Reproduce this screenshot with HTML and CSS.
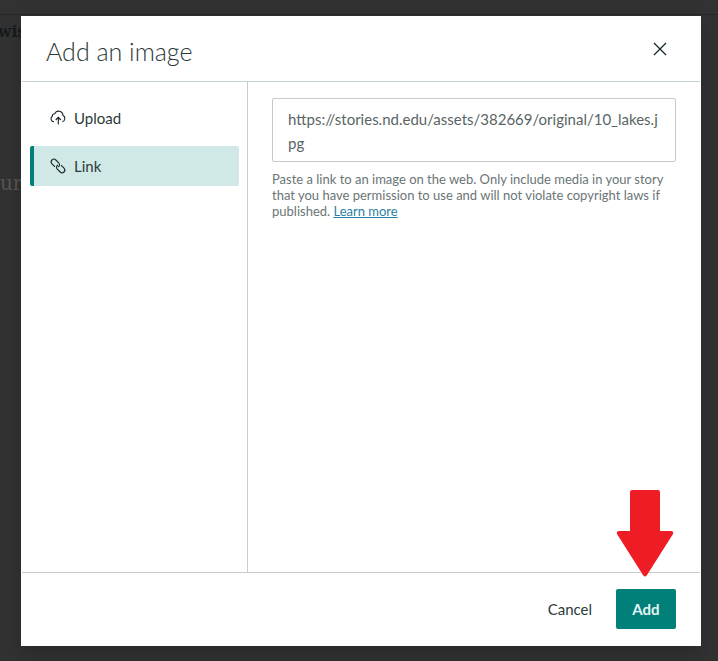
FILE: index.html
```html
<!DOCTYPE html>
<html lang="en">
<head>
<meta charset="utf-8">
<meta name="viewport" content="width=device-width, initial-scale=1">
<title>Add an image</title>
<link rel="stylesheet" href="styles.css">
</head>
<body>
<div class="page" aria-hidden="true">
  <div class="page-bar"></div>
  <p class="page-heading">wis</p>
  <p class="page-text">ur</p>
</div>
<div class="backdrop">
  <section class="dialog" role="dialog" aria-modal="true" aria-labelledby="dialog-title">
    <header class="dialog-header">
      <h1 class="dialog-title" id="dialog-title">Add an image</h1>
      <button class="close" type="button" aria-label="Close">
        <svg width="14" height="14" viewBox="0 0 14 14"><path d="M1 1l12 12M13 1L1 13"/></svg>
      </button>
    </header>
    <div class="dialog-body">
      <nav class="sources">
        <button class="source" type="button">
          <svg class="icon" width="16" height="16" viewBox="0 0 16 16"><path d="M4 11.800A3.100 3.100 0 0 1 2.300 6.200 2.300 2.300 0 0 1 4.700 3.700 4.300 4.300 0 0 1 12.900 5.300 3.500 3.500 0 0 1 12.300 11.800M8.300 14.500V7.500M5.700 10L8.300 7.300l2.600 2.700"/></svg>
          Upload
        </button>
        <button class="source source-active" type="button" aria-current="true">
          <svg class="icon" width="16" height="16" viewBox="0 0 16 16"><g transform="rotate(45 8 8)"><path d="M6.500 10.700H2.200A2.700 2.700 0 0 1 2.200 5.300H6.300A2.700 2.700 0 0 1 8.900 8.600M9.500 5.300H13.800A2.700 2.700 0 0 1 13.800 10.700H9.700A2.700 2.700 0 0 1 7.100 7.400"/></g></svg>
          Link
        </button>
      </nav>
      <div class="panel">
        <textarea class="url" rows="2" aria-label="Image link" aria-describedby="url-help" spellcheck="false">https://stories.nd.edu/assets/382669/original/10_lakes.jpg</textarea>
        <p class="help" id="url-help">Paste a link to an image on the web. Only include media in your story that you have permission to use and will not violate copyright laws if published. <a class="help-link" href="#">Learn more</a></p>
      </div>
    </div>
    <footer class="dialog-footer">
      <button class="button" type="button">Cancel</button>
      <div class="primary">
        <svg class="arrow" width="58" height="88" viewBox="0 0 58 88" aria-hidden="true"><path d="M16 1h26q2 0 2 2v39h11q3 0 2 3L31 86q-2 3-4 0L1 45q-1-3 2-3h11V3q0-2 2-2z"/></svg>
        <button class="button button-primary" type="button">Add</button>
      </div>
    </footer>
  </section>
</div>
</body>
</html>
```
FILE: styles.css
```css
* {
  box-sizing: border-box;
}

body {
  margin: 0;
  background: #323232;
  color: #2b3a3a;
  font-family: Lato, "Liberation Sans", sans-serif;
  font-size: 15px;
}

button,
textarea {
  font: inherit;
  color: inherit;
}

.page {
  position: absolute;
  inset: 0;
  overflow: hidden;
  font-family: "Noto Serif", "Liberation Serif", serif;
}

.page-bar {
  height: 15px;
  border-bottom: 1px solid #272727;
}

.page-heading {
  margin: 4px 0 0 -2px;
  color: #15191c;
  font-size: 16px;
  font-weight: bold;
  line-height: 24px;
}

.page-text {
  margin: 126px 0 0;
  color: #555;
  font-size: 20px;
  line-height: 28px;
}

.backdrop {
  position: relative;
  display: flex;
  min-height: 100vh;
  padding: 16px 17px 15px 21px;
}

.dialog {
  display: flex;
  flex: 1;
  flex-direction: column;
  background: #fff;
  box-shadow: 0 8px 20px rgba(0, 0, 0, 0.2);
}

.dialog-header {
  display: flex;
  align-items: center;
  justify-content: space-between;
  height: 66px;
  margin: 0 1px;
  padding: 4px 24px 0;
  border-bottom: 1px solid #c4d2d3;
}

.dialog-title {
  margin: 0;
  font-size: 25px;
  font-weight: 300;
  line-height: 32px;
}

.close {
  display: flex;
  align-items: center;
  justify-content: center;
  width: 32px;
  height: 32px;
  margin-bottom: 4px;
  padding: 0;
  border: 0;
  background: none;
}

.close svg {
  fill: none;
  stroke: #16262a;
  stroke-width: 1.3;
}

.dialog-body {
  display: flex;
  flex: 1;
}

.sources {
  display: flex;
  flex: 0 0 227px;
  flex-direction: column;
  gap: 8px;
  padding: 16px 8px 16px 9px;
  border-right: 1px solid #c5cdce;
}

.source {
  display: flex;
  align-items: center;
  gap: 8px;
  height: 40px;
  padding: 0 16px;
  border: 0;
  border-left: 4px solid transparent;
  border-radius: 2px;
  background: none;
  text-align: left;
}

.source-active {
  border-left-color: #008078;
  background: #d1e9e6;
}

.icon {
  overflow: visible;
  fill: none;
  stroke: #16262a;
  stroke-width: 1.1;
}

.panel {
  flex: 1;
  min-width: 0;
  padding: 16px 25px 16px 24px;
}

.url {
  display: block;
  width: 100%;
  height: 64px;
  padding: 8px 15px;
  overflow: hidden;
  border: 1px solid #c3cbcb;
  border-radius: 2px;
  outline: 0;
  background: #fff;
  color: #596565;
  font-size: 15px;
  line-height: 24px;
  word-break: break-all;
  resize: none;
}

.help {
  margin: 9px 0 0;
  color: #6a7575;
  font-size: 13px;
  line-height: 16px;
}

.help-link {
  color: #2c7fa3;
}

.dialog-footer {
  display: flex;
  align-items: center;
  justify-content: flex-end;
  gap: 8px;
  height: 74px;
  margin: 0 1px;
  padding: 0 24px 2px;
  border-top: 1px solid #c7cccd;
}

.button {
  height: 40px;
  padding: 0 16px;
  border: 0;
  border-radius: 2px;
  background: none;
}

.primary {
  position: relative;
}

.button-primary {
  min-width: 60px;
  background: #008078;
  color: #e4f6f3;
  font-weight: bold;
}

.arrow {
  position: absolute;
  bottom: 100%;
  left: 50%;
  margin: 0 0 12px -30px;
  fill: #ee1c25;
  pointer-events: none;
}
```
